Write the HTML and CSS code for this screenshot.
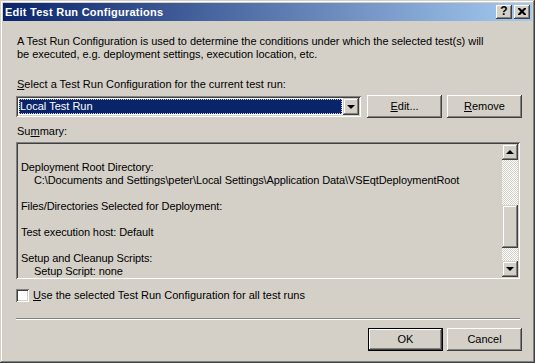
FILE: index.html
```html
<!DOCTYPE html>
<html>
<head>
<meta charset="utf-8">
<title>Edit Test Run Configurations</title>
<link rel="stylesheet" href="styles.css">
</head>
<body>
<div class="window">
  <div class="titlebar">
    <span class="title">Edit Test Run Configurations</span>
    <div class="caption-btns">
      <span class="cbtn help">?</span>
      <span class="cbtn close"><svg width="8" height="7" viewBox="0 0 8 7"><path d="M0 0h2l2 2 2-2h2v1l-2.5 2.5L8 6v1H6L4 5 2 7H0V6l2.5-2.5L0 1z" fill="#000"/></svg></span>
    </div>
  </div>
  <div class="client">
    <p class="intro">A Test Run Configuration is used to determine the conditions under which the selected test(s) will<br>be executed, e.g. deployment settings, execution location, etc.</p>
    <p class="label select-label"><u>S</u>elect a Test Run Configuration for the current test run:</p>
    <div class="select-row">
      <div class="combo">
        <div class="combo-value"><span class="focus">Local Test Run</span></div>
        <span class="drop-btn"><i class="tri-down"></i></span>
      </div>
      <button class="btn btn-edit"><u>E</u>dit...</button>
      <button class="btn btn-remove"><u>R</u>emove</button>
    </div>
    <p class="label summary-label">Su<u>m</u>mary:</p>
    <div class="summary">
      <div class="summary-text">
        <div class="line">Deployment Root Directory:</div>
        <div class="line indent">C:\Documents and Settings\peter\Local Settings\Application Data\VSEqtDeploymentRoot</div>
        <div class="line blank"></div>
        <div class="line">Files/Directories Selected for Deployment:</div>
        <div class="line blank"></div>
        <div class="line">Test execution host: Default</div>
        <div class="line blank"></div>
        <div class="line">Setup and Cleanup Scripts:</div>
        <div class="line indent">Setup Script: none</div>
      </div>
      <div class="scrollbar">
        <span class="sb-btn"><i class="tri-up"></i></span>
        <span class="sb-track sb-track-top"></span>
        <span class="sb-thumb"></span>
        <span class="sb-track sb-track-bottom"></span>
        <span class="sb-btn"><i class="tri-down"></i></span>
      </div>
    </div>
    <div class="check-row"><span class="checkbox"></span><span class="check-label"><u>U</u>se the selected Test Run Configuration for all test runs</span></div>
    <div class="sep"></div>
    <div class="footer">
      <button class="btn btn-default">OK</button>
      <button class="btn btn-cancel">Cancel</button>
    </div>
  </div>
</div>
</body>
</html>
```

FILE: styles.css
```css
* { box-sizing: border-box; }
html, body { margin: 0; padding: 0; background: #d4d0c8; }
body {
  font-family: "Liberation Sans", Arial, sans-serif;
  font-size: 11px;
  line-height: 13px;
  color: #000;
}
.window {
  width: 535px;
  height: 363px;
  padding: 3px;
  background: #d4d0c8;
  box-shadow: inset -1px -1px #404040, inset 1px 1px #d4d0c8, inset -2px -2px #808080, inset 2px 2px #fff;
  overflow: hidden;
}
.titlebar {
  height: 18px;
  background: linear-gradient(to right, #0a246a, #a6caf0);
  display: flex;
  align-items: center;
  justify-content: space-between;
  padding: 0 2px 0 2px;
  color: #fff;
  font-weight: bold;
}
.title { line-height: 18px; letter-spacing: 0.25px; }
.caption-btns { display: flex; gap: 2px; }
.cbtn {
  width: 16px;
  height: 14px;
  background: #d4d0c8;
  box-shadow: inset -1px -1px #404040, inset 1px 1px #fff, inset -2px -2px #808080;
  display: flex;
  align-items: center;
  justify-content: center;
  color: #000;
  font-size: 12px;
  font-weight: bold;
  letter-spacing: 0;
}
.cbtn.help { padding-bottom: 1px; }
.cbtn.close svg { display: block; margin-bottom: 1px; }
.client { padding: 0 10px 0 13px; }
p { margin: 0; }
.intro { margin-top: 14px; padding-left: 1px; letter-spacing: -0.05px; }
.label { padding-left: 1px; }
.select-label { margin-top: 17px; }
.select-row { margin-top: 4px; display: flex; align-items: center; height: 23px; }
.combo {
  width: 345px;
  height: 21px;
  background: #fff;
  box-shadow: inset 1px 1px #808080, inset -1px -1px #fff, inset 2px 2px #404040, inset -2px -2px #d4d0c8;
  padding: 2px;
  display: flex;
}
.combo-value { flex: 1; padding: 1px; }
.focus {
  display: block;
  height: 15px;
  background: #0a246a;
  color: #fff;
  border: 1px dotted #c8c8d8;
  line-height: 13px;
  padding-left: 0;
}
.drop-btn, .sb-btn {
  width: 16px;
  height: 17px;
  background: #d4d0c8;
  box-shadow: inset -1px -1px #404040, inset 1px 1px #d4d0c8, inset -2px -2px #808080, inset 2px 2px #fff;
  display: flex;
  align-items: center;
  justify-content: center;
}
.tri-down, .tri-up {
  display: block;
  width: 0;
  height: 0;
  border-left: 4px solid transparent;
  border-right: 4px solid transparent;
}
.tri-down { border-top: 4px solid #000; }
.tri-up { border-bottom: 4px solid #000; }
.btn {
  font: inherit;
  color: #000;
  height: 23px;
  width: 75px;
  padding: 0;
  border: 0;
  background: #d4d0c8;
  box-shadow: inset -1px -1px #404040, inset 1px 1px #fff, inset -2px -2px #808080;
  text-align: center;
}
.btn-edit { margin-left: 6px; }
.btn-remove { margin-left: 5px; }
.summary-label { margin-top: 7px; }
.summary {
  margin-top: 4px;
  width: 504px;
  height: 137px;
  padding: 2px;
  background: #d4d0c8;
  box-shadow: inset 1px 1px #808080, inset -1px -1px #fff, inset 2px 2px #404040, inset -2px -2px #d4d0c8;
  display: flex;
}
.summary-text { flex: 1; overflow: hidden; padding: 17px 0 0 3px; white-space: nowrap; letter-spacing: -0.1px; }
.line { height: 13px; }
.indent { padding-left: 13px; }
.scrollbar { width: 16px; display: flex; flex-direction: column; }
.sb-btn { height: 16px; flex: none; }
.sb-track {
  background: repeating-conic-gradient(#fff 0 25%, #d4d0c8 0 50%) 0 0 / 2px 2px;
}
.sb-track-top { height: 45px; }
.sb-track-bottom { height: 13px; }
.sb-thumb {
  height: 43px;
  background: #d4d0c8;
  box-shadow: inset -1px -1px #404040, inset 1px 1px #d4d0c8, inset -2px -2px #808080, inset 2px 2px #fff;
}
.check-row { margin-top: 10px; display: flex; align-items: center; height: 13px; }
.checkbox {
  width: 13px;
  height: 13px;
  background: #fff;
  box-shadow: inset 1px 1px #808080, inset -1px -1px #fff, inset 2px 2px #404040, inset -2px -2px #d4d0c8;
  flex: none;
}
.check-label { margin-left: 4px; }
.sep {
  margin-top: 16px;
  margin-right: 2px;
  height: 2px;
  border-top: 1px solid #808080;
  border-bottom: 1px solid #fff;
}
.footer { margin-top: 8px; display: flex; justify-content: flex-end; }
.btn-default {
  box-shadow: inset 0 0 0 1px #000, inset -2px -2px #404040, inset 2px 2px #fff, inset -3px -3px #808080;
}
.btn-cancel { margin-left: 4px; }
```
